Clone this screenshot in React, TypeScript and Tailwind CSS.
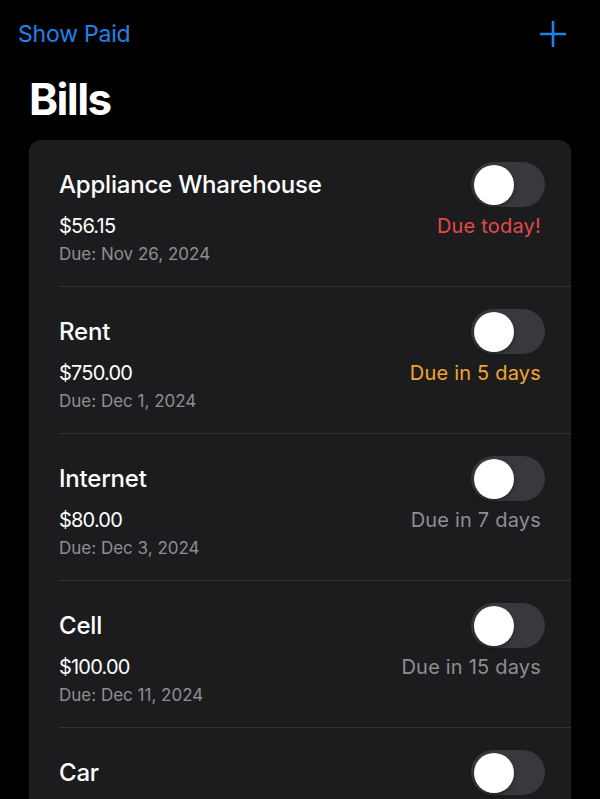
const bills = [
  { name: 'Appliance Wharehouse', amount: '$56.15', due: 'Due today!', date: 'Due: Nov 26, 2024', tone: 'text-[#e5484a]' },
  { name: 'Rent', amount: '$750.00', due: 'Due in 5 days', date: 'Due: Dec 1, 2024', tone: 'text-[#f2a533]' },
  { name: 'Internet', amount: '$80.00', due: 'Due in 7 days', date: 'Due: Dec 3, 2024', tone: 'text-[#8e8e93]' },
  { name: 'Cell', amount: '$100.00', due: 'Due in 15 days', date: 'Due: Dec 11, 2024', tone: 'text-[#8e8e93]' },
  { name: 'Car', amount: '', due: '', date: '', tone: 'text-[#8e8e93]' },
]

function Toggle() {
  return (
    <div className="w-[74px] h-[45px] rounded-full bg-[#39393d] p-[3px] flex items-center">
      <div className="w-[40px] h-[40px] rounded-full bg-white shadow-[0_2px_4px_rgba(0,0,0,0.35)]" />
    </div>
  )
}

export default function App() {
  return (
    <div className="h-[799px] overflow-hidden bg-black text-white font-['Inter','Roboto',sans-serif]">
      <div className="flex items-center justify-between pl-[18px] pr-[34px] pt-[16px] h-[52px]">
        <span className="text-[23px] text-[#1c84eb] tracking-[-0.2px]">Show Paid</span>
        <svg width="26" height="26" viewBox="0 0 26 26" className="text-[#1c84eb]">
          <path d="M13 1v24M1 13h24" stroke="currentColor" strokeWidth="2.6" strokeLinecap="round" />
        </svg>
      </div>
      <h1 className="pl-[29px] mt-[19px] text-[44px] leading-[56px] font-bold tracking-[-1.6px]">Bills</h1>
      <div className="mx-[29px] mt-[13px] rounded-xl bg-[#1c1c1e]">
        {bills.map((b, i) => (
          <div key={b.name}>
            {i > 0 && <div className="ml-[30px] h-px bg-[#333336]" />}
            <div className="pl-[30px] pr-[26px] pt-[22px] pb-[21px]">
              <div className="flex items-center justify-between h-[45px]">
                <span className="text-[24px] font-medium tracking-[-0.2px]">{b.name}</span>
                <Toggle />
              </div>
              {b.amount && (
                <>
                  <div className="flex items-center justify-between mt-[6px] h-[26px] pr-[4px]">
                    <span className="text-[20px] tracking-[-0.8px]">{b.amount}</span>
                    <span className={`text-[20px] tracking-[0.2px] ${b.tone}`}>{b.due}</span>
                  </div>
                  <div className="mt-[4px] h-[22px] text-[17px] leading-[22px] text-[#8e8e93]">{b.date}</div>
                </>
              )}
            </div>
          </div>
        ))}
      </div>
    </div>
  )
}
